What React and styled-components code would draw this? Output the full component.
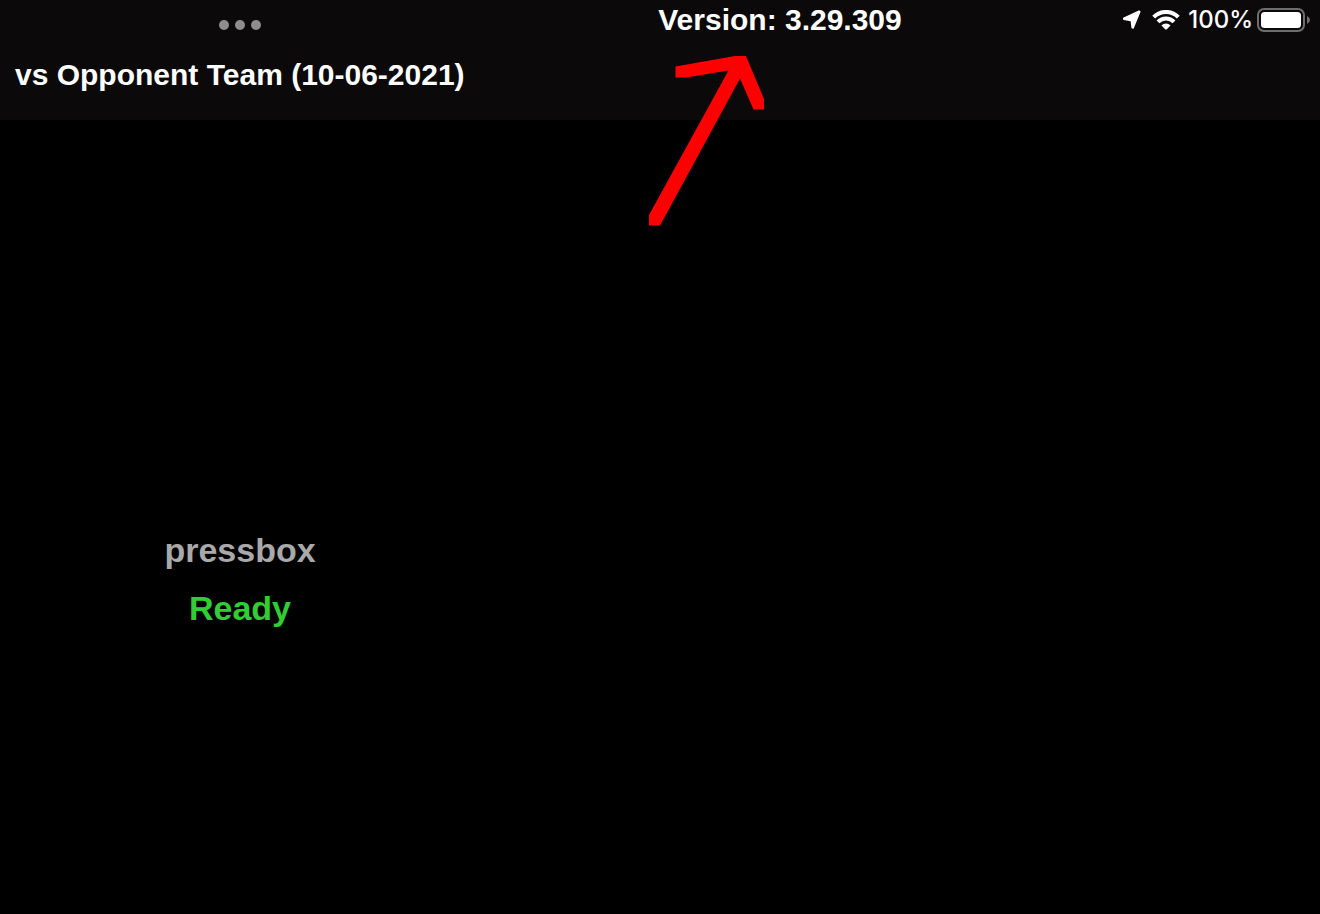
import React from "react";
import styled, { createGlobalStyle } from "styled-components";

const GlobalStyle = createGlobalStyle`
  * {
    box-sizing: border-box;
  }

  body {
    margin: 0;
    background-color: #000;
    font-family: "Liberation Sans", Arial, sans-serif;
  }
`;

function LocationIcon() {
  return (
    <svg width="22" height="20" viewBox="0 0 22 20" aria-hidden="true">
      <path
        d="M17.2 1.8 L10.7 17.4 L9.8 10.2 L2.2 8.7 Z"
        fill="#fff"
        stroke="#fff"
        strokeWidth="2.6"
        strokeLinejoin="round"
      />
    </svg>
  );
}

function WifiIcon() {
  return (
    <svg width="28" height="20" viewBox="0 0 28 20" aria-hidden="true">
      <g fill="none" stroke="#fff" strokeWidth="4">
        <path d="M1.7 7.2 A17 17 0 0 1 26.3 7.2" />
        <path d="M6 11.9 A11.1 11.1 0 0 1 22 11.9" />
      </g>
      <path
        d="M9.4 15.4 A6.3 6.3 0 0 1 18.6 15.4 L14.8 19.3 Q14 20.1 13.2 19.3 Z"
        fill="#fff"
      />
    </svg>
  );
}

function BatteryIcon() {
  return (
    <svg width="54" height="24" viewBox="0 0 54 24" aria-hidden="true">
      <rect
        x="1"
        y="1"
        width="46"
        height="22"
        rx="6"
        fill="none"
        stroke="#6f6e6e"
        strokeWidth="2"
      />
      <rect x="4" y="4" width="40" height="16" rx="3.5" fill="#fff" />
      <path d="M50 8 Q53 9.3 53 12 Q53 14.7 50 16 Z" fill="#6f6e6e" />
    </svg>
  );
}

function Arrow() {
  return (
    <ArrowDrawing viewBox="0 0 116 170" aria-hidden="true">
      <path
        d="M0 159 V169.5 H11 L91 22.5 L104.5 53.5 H115 V43 L97 0 H86 L26.5 10.5 V21.5 H37 L79.5 14.5 Z"
        fill="#f00"
      />
    </ArrowDrawing>
  );
}

export default function App() {
  return (
    <Page>
      <GlobalStyle />
      <Header>
        <TopRow>
          <MenuCell>
            <MenuButton type="button" aria-label="Window options">
              <Dot />
              <Dot />
              <Dot />
            </MenuButton>
          </MenuCell>
          <Version>
            Version: 3.29.309
            <Arrow />
          </Version>
          <Status>
            <LocationIcon />
            <WifiIcon />
            <Battery>
              <span>100%</span>
              <BatteryIcon />
            </Battery>
          </Status>
        </TopRow>
        <Title>vs Opponent Team (10-06-2021)</Title>
      </Header>
      <Main>
        <Connection>
          <Label $color="#a9a9a9">pressbox</Label>
          <Label $color="#32cd32">Ready</Label>
        </Connection>
      </Main>
    </Page>
  );
}

const Page = styled.div`
  min-height: 100vh;
  display: flex;
  flex-direction: column;
  color: #fff;
`;

const Header = styled.header`
  height: 120px;
  background-color: #0b0909;
`;

const TopRow = styled.div`
  display: grid;
  grid-template-columns: 4fr 5fr 2fr;
  height: 40px;
`;

const MenuCell = styled.div`
  display: flex;
  justify-content: center;
  align-items: flex-end;
`;

const MenuButton = styled.button`
  display: flex;
  gap: 6px;
  padding: 10px;
  border: none;
  background: none;
  cursor: pointer;
`;

const Dot = styled.span`
  width: 10px;
  height: 10px;
  border-radius: 50%;
  background-color: #8e8e8e;
`;

const Version = styled.div`
  position: relative;
  text-align: center;
  font-size: 30px;
  font-weight: bold;
  line-height: 40px;
`;

const ArrowDrawing = styled.svg`
  position: absolute;
  top: 56px;
  left: calc(50% - 131px);
  width: 116px;
  height: 170px;
`;

const Status = styled.div`
  display: flex;
  justify-content: flex-end;
  align-items: center;
  gap: 8px;
  padding-right: 9px;
`;

const Battery = styled.div`
  display: flex;
  align-items: center;
  gap: 4px;
  font-family: Inter, sans-serif;
  font-size: 24px;
  font-weight: 500;
  line-height: 40px;
`;

const Title = styled.h1`
  margin: 0;
  padding: 15px;
  font-size: 30px;
  font-weight: bold;
  line-height: 40px;
`;

const Main = styled.main`
  flex: 1;
  display: grid;
  grid-template-columns: 4fr 7fr;
`;

const Connection = styled.section`
  padding-top: 401px;
  text-align: center;
`;

const Label = styled.p`
  margin: 0;
  color: ${(props) => props.$color};
  font-size: 34px;
  font-weight: bold;
  line-height: 58px;
`;
